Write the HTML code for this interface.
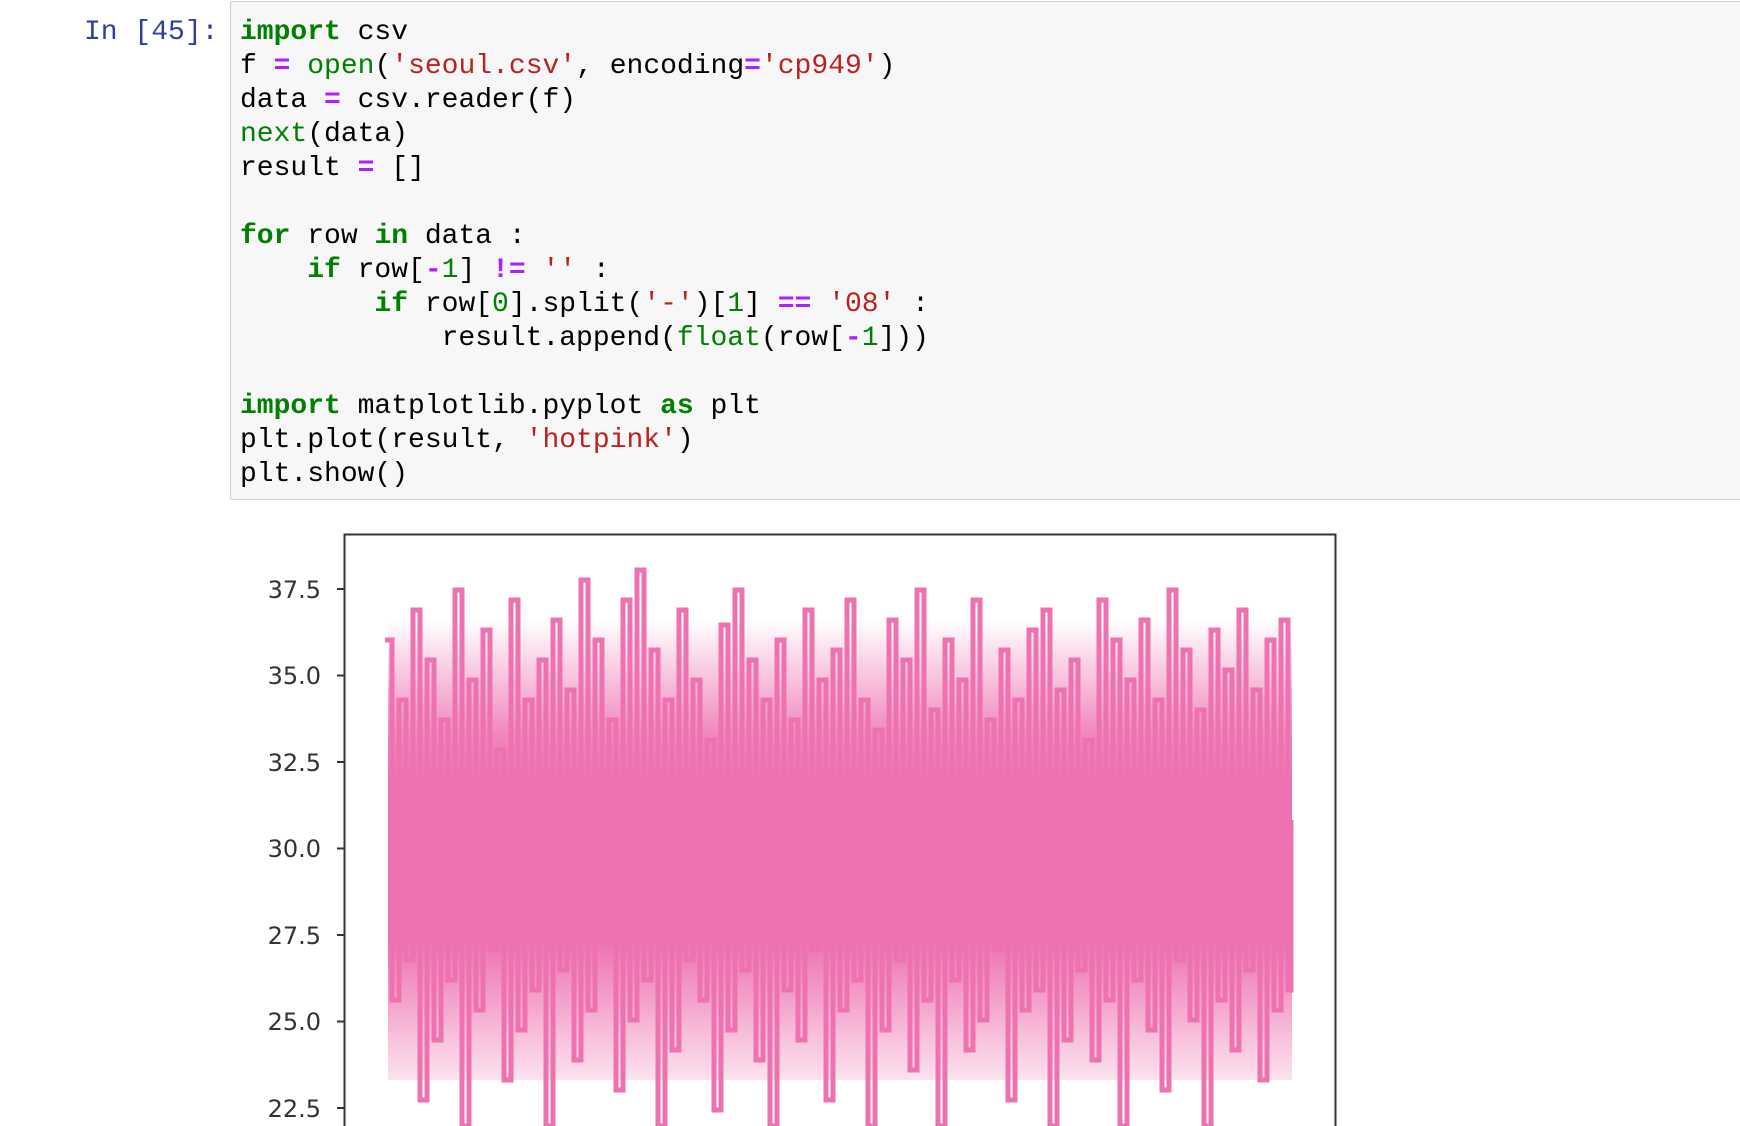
<!DOCTYPE html>
<html><head><meta charset="utf-8"><style>
html,body{margin:0;padding:0;background:#fff;width:1740px;height:1126px;overflow:hidden;position:relative}
.prompt{position:absolute;left:84px;top:16px;font:28px/34px "Liberation Mono",monospace;color:#303F9F}
.box{position:absolute;left:230px;top:1px;width:1520px;height:497px;background:#f7f7f7;border:1px solid #cfcfcf;border-radius:2px}
pre{position:absolute;left:240px;top:16px;margin:0;font:28px/34px "Liberation Mono",monospace;color:#000}
.k{color:#008000;font-weight:bold}.o{color:#AA22FF;font-weight:bold}.s{color:#BA2121}.b{color:#008000}.n{color:#008000}
svg{position:absolute;left:0;top:0}
</style></head><body>
<div class="prompt">In [45]:</div>
<div class="box"></div>
<pre><span class="k">import</span> csv
f <span class="o">=</span> <span class="b">open</span>(<span class="s">'seoul.csv'</span>, encoding<span class="o">=</span><span class="s">'cp949'</span>)
data <span class="o">=</span> csv.reader(f)
<span class="b">next</span>(data)
result <span class="o">=</span> []

<span class="k">for</span> row <span class="k">in</span> data :
    <span class="k">if</span> row[<span class="o">-</span><span class="n">1</span>] <span class="o">!=</span> <span class="s">''</span> :
        <span class="k">if</span> row[<span class="n">0</span>].split(<span class="s">'-'</span>)[<span class="n">1</span>] <span class="o">==</span> <span class="s">'08'</span> :
            result.append(<span class="b">float</span>(row[<span class="o">-</span><span class="n">1</span>]))

<span class="k">import</span> matplotlib.pyplot <span class="k">as</span> plt
plt.plot(result, <span class="s">'hotpink'</span>)
plt.show()</pre>
<svg width="1740" height="1126" viewBox="0 0 1740 1126">
<defs><linearGradient id="g" x1="0" y1="0" x2="0" y2="1">
<stop offset="0" stop-color="#ee72b0" stop-opacity="0"/>
<stop offset="0.25" stop-color="#ee72b0" stop-opacity="0.85"/>
<stop offset="0.35" stop-color="#ee72b0" stop-opacity="1"/>
<stop offset="0.7" stop-color="#ee72b0" stop-opacity="1"/>
<stop offset="1" stop-color="#ee72b0" stop-opacity="0.2"/>
</linearGradient></defs>
<rect x="388" y="620" width="904" height="460" fill="url(#g)"/>
<path fill="none" stroke="#ee72b0" stroke-width="5" d="M385,640 H392 V1000 H399 V700 H406 V960 H413 V610 H420 V1100 H427 V660 H434 V1040 H441 V720 H448 V980 H455 V590 H462 V1126 H469 V680 H476 V1010 H483 V630 H490 V950 H497 V750 H504 V1080 H511 V600 H518 V1030 H525 V700 H532 V990 H539 V660 H546 V1126 H553 V620 H560 V970 H567 V690 H574 V1060 H581 V580 H588 V1010 H595 V640 H602 V940 H609 V720 H616 V1090 H623 V600 H630 V1020 H637 V570 H644 V980 H651 V650 H658 V1126 H665 V700 H672 V1050 H679 V610 H686 V960 H693 V680 H700 V1000 H707 V740 H714 V1110 H721 V625 H728 V1030 H735 V590 H742 V970 H749 V660 H756 V1060 H763 V700 H770 V1126 H777 V640 H784 V990 H791 V720 H798 V1040 H805 V610 H812 V950 H819 V680 H826 V1100 H833 V650 H840 V1010 H847 V600 H854 V980 H861 V700 H868 V1126 H875 V730 H882 V1030 H889 V620 H896 V960 H903 V660 H910 V1070 H917 V590 H924 V1000 H931 V710 H938 V1126 H945 V640 H952 V980 H959 V680 H966 V1050 H973 V600 H980 V1020 H987 V720 H994 V950 H1001 V650 H1008 V1100 H1015 V700 H1022 V1010 H1029 V630 H1036 V990 H1043 V610 H1050 V1126 H1057 V690 H1064 V1040 H1071 V660 H1078 V970 H1085 V740 H1092 V1060 H1099 V600 H1106 V1000 H1113 V640 H1120 V1126 H1127 V680 H1134 V980 H1141 V620 H1148 V1030 H1155 V700 H1162 V1090 H1169 V590 H1176 V960 H1183 V650 H1190 V1020 H1197 V710 H1204 V1126 H1211 V630 H1218 V1000 H1225 V670 H1232 V1050 H1239 V610 H1246 V970 H1253 V690 H1260 V1080 H1267 V640 H1274 V1010 H1281 V620 H1288 V990 H1291 V820"/>
<rect x="344.5" y="534.5" width="991" height="600" fill="none" stroke="#333" stroke-width="2"/>
<g stroke="#333" stroke-width="2">
<line x1="337" y1="589" x2="344" y2="589"/><line x1="337" y1="675.5" x2="344" y2="675.5"/><line x1="337" y1="762" x2="344" y2="762"/><line x1="337" y1="848.5" x2="344" y2="848.5"/><line x1="337" y1="935" x2="344" y2="935"/><line x1="337" y1="1021.5" x2="344" y2="1021.5"/><line x1="337" y1="1108" x2="344" y2="1108"/>
</g>
<g font-family="DejaVu Sans, sans-serif" font-size="24" fill="#333" text-anchor="end">
<text x="321" y="598">37.5</text><text x="321" y="684">35.0</text><text x="321" y="771">32.5</text><text x="321" y="857">30.0</text><text x="321" y="944">27.5</text><text x="321" y="1030">25.0</text><text x="321" y="1117">22.5</text>
</g>
</svg>
</body></html>
